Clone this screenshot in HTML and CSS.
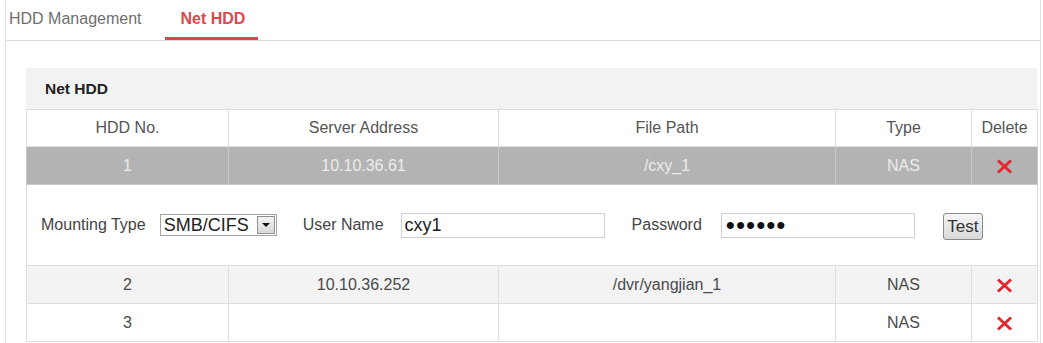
FILE: index.html
```
<!DOCTYPE html>
<html lang="en">
 <head>
   <title>Net HDD</title>
   <meta charset="utf-8"/>
   <link rel="stylesheet" href="styles.css">
 </head>

 <body>
   <div id="wrap">
      <ul class="tabs">
         <li>HDD Management</li>
         <li class="on">Net HDD</li>
      </ul>

      <section class="panel">
         <h3 class="panel_title">Net HDD</h3>
         <table class="hdd_list">
            <colgroup>
               <col class="c_no"/>
               <col class="c_addr"/>
               <col class="c_path"/>
               <col class="c_type"/>
               <col class="c_del"/>
            </colgroup>
            <thead>
               <tr>
                  <th>HDD No.</th>
                  <th>Server Address</th>
                  <th>File Path</th>
                  <th>Type</th>
                  <th>Delete</th>
               </tr>
            </thead>
            <tbody>
               <tr class="sel">
                  <td>1</td>
                  <td>10.10.36.61</td>
                  <td>/cxy_1</td>
                  <td>NAS</td>
                  <td><span class="del"><svg width="17" height="15" viewBox="0 0 17 15"><path d="M2 1.5 L15 13.5 M15 1.5 L2 13.5"/></svg></span></td>
               </tr>
               <tr class="edit">
                  <td colspan="5">
                     <div class="form_row">
                        <label class="lb_mount">Mounting Type</label>
                        <span class="fake_select">
                           <span class="sel_txt">SMB/CIFS</span>
                           <span class="sel_btn"></span>
                        </span>
                        <label class="lb_user">User Name</label>
                        <input class="ip_user" type="text" value="cxy1"/>
                        <label class="lb_pw">Password</label>
                        <input class="ip_pw" type="password" value="123456"/>
                        <button class="btn_test" type="button">Test</button>
                     </div>
                  </td>
               </tr>
               <tr class="even">
                  <td>2</td>
                  <td>10.10.36.252</td>
                  <td>/dvr/yangjian_1</td>
                  <td>NAS</td>
                  <td><span class="del"><svg width="17" height="15" viewBox="0 0 17 15"><path d="M2 1.5 L15 13.5 M15 1.5 L2 13.5"/></svg></span></td>
               </tr>
               <tr>
                  <td>3</td>
                  <td></td>
                  <td></td>
                  <td>NAS</td>
                  <td><span class="del"><svg width="17" height="15" viewBox="0 0 17 15"><path d="M2 1.5 L15 13.5 M15 1.5 L2 13.5"/></svg></span></td>
               </tr>
            </tbody>
         </table>
      </section>
   </div>
 </body>
</html>
```

FILE: styles.css
```
/*####### reset #######*/
*{margin:0; padding:0; box-sizing:border-box;}
ul{list-style:none;}
body{background-color:#fff; color:#444; font-family:"Liberation Sans", Arial, sans-serif; font-size:16px;}

#wrap{width:1036px; min-height:343px; margin-left:5px; border-left:1px solid #e2e2e2; border-right:1px solid #e2e2e2;}

/*####### tabs #######*/
.tabs{display:flex; height:41px; padding-left:3px; border-bottom:1px solid #dcdcdc;}
.tabs li{height:40px; line-height:38px; color:#6f6f6f; margin-right:23px;}
.tabs li.on{padding:0 13px 0 16px; color:#e0474c; font-weight:bold; border-bottom:3px solid #d9474d;}

/*####### panel #######*/
.panel{margin:27px 3px 0 20px;}
.panel_title{height:41px; line-height:41px; padding-left:19px; background-color:#f2f2f2; font-size:15.5px; color:#222;}

/*####### table #######*/
.hdd_list{width:100%; border-collapse:collapse; table-layout:fixed;}
.c_no{width:202px;}
.c_addr{width:270px;}
.c_path{width:337px;}
.c_type{width:136px;}
.c_del{width:66px;}

.hdd_list th,
.hdd_list td{height:37px; border:1px solid #dedede; text-align:center; font-weight:normal; color:#4a4a4a;}
.hdd_list th{color:#555;}

.hdd_list tr.sel td{background-color:#b3b3b3; color:#ececec; border-color:#c9c9c9; height:38px;}
.hdd_list tr.even td{background-color:#f3f3f3; height:38px;}
.hdd_list tr:last-child td{height:38px;}

.del{display:inline-flex; vertical-align:middle;}
.del svg path{stroke:#e3262e; stroke-width:3; fill:none;}

/*####### edit row #######*/
.hdd_list tr.edit td{height:81px; padding-left:14px; text-align:left; background-color:#fff;}
.form_row{display:flex; align-items:center; color:#444;}

.fake_select{display:inline-flex; align-items:center; width:117px; height:22px; margin-left:14px; border:1px solid #a4a4a4; background-color:#fff;}
.sel_txt{flex:1; padding-left:3px; color:#222; font-size:18px; line-height:20px;}
.sel_btn{position:relative; width:18px; height:18px; margin-right:1px; border:1px solid #8f8f8f; background:linear-gradient(#f4f4f4, #d8d8d8);}
.sel_btn:after{content:""; position:absolute; left:4px; top:6px; border-left:4px solid transparent; border-right:4px solid transparent; border-top:4px solid #111;}

.lb_user{margin-left:26px;}
.lb_pw{margin-left:27px;}

.form_row input{height:25px; border:1px solid #cfcfcf; font-family:"Liberation Sans", Arial, sans-serif; font-size:18px; color:#222; padding-left:3px;}
.form_row .ip_user{width:204px; margin-left:17px;}
.form_row .ip_pw{width:194px; margin-left:19px; padding-left:4px; font-size:26px; letter-spacing:1px; color:#111;}

.btn_test{width:40px; height:27px; margin-left:28px; margin-top:3px; padding:0; border:1px solid #8a8a8a; border-radius:3px; background:linear-gradient(#f6f6f6, #d9d9d9); font-family:"Liberation Sans", Arial, sans-serif; font-size:17px; color:#333;}
```
